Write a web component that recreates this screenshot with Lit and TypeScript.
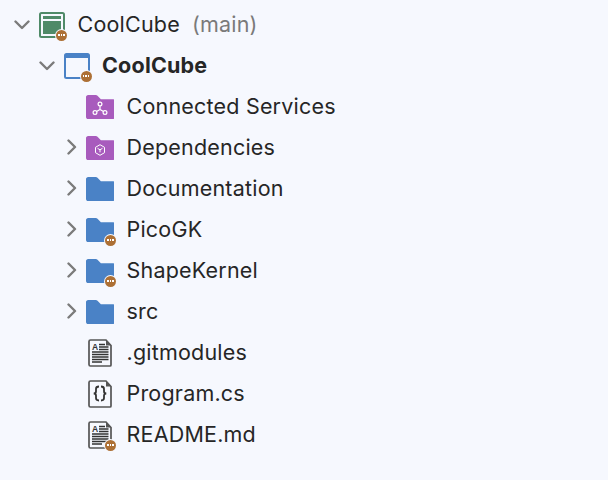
import { LitElement, css, html, svg, nothing } from 'lit';
import { customElement } from 'lit/decorators.js';

type IconKind = 'project' | 'window' | 'services' | 'deps' | 'folder' | 'doc' | 'code';

interface Row {
  label: string;
  level: number;
  icon: IconKind;
  chevron?: 'open' | 'closed';
  badge?: boolean;
  bold?: boolean;
  suffix?: string;
}

const ROWS: Row[] = [
  { label: 'CoolCube', suffix: '(main)', level: 0, icon: 'project', chevron: 'open', badge: true },
  { label: 'CoolCube', level: 1, icon: 'window', chevron: 'open', badge: true, bold: true },
  { label: 'Connected Services', level: 2, icon: 'services' },
  { label: 'Dependencies', level: 2, icon: 'deps', chevron: 'closed' },
  { label: 'Documentation', level: 2, icon: 'folder', chevron: 'closed' },
  { label: 'PicoGK', level: 2, icon: 'folder', chevron: 'closed', badge: true },
  { label: 'ShapeKernel', level: 2, icon: 'folder', chevron: 'closed', badge: true },
  { label: 'src', level: 2, icon: 'folder', chevron: 'closed' },
  { label: '.gitmodules', level: 2, icon: 'doc' },
  { label: 'Program.cs', level: 2, icon: 'code' },
  { label: 'README.md', level: 2, icon: 'doc', badge: true },
];

const FOLDER = 'M0 2.2C0 1 .9 0 2.2 0h7.6c.7 0 1.2.2 1.7.7l3.4 3.5h11.9c1.2 0 2.1.9 2.1 2.1v15.6c0 1.2-.9 2.1-2.1 2.1H2.2C.9 24 0 23.1 0 21.9z';
const PAGE = 'M2.5 1h15.5l5 5.5v19.5a1 1 0 0 1-1 1H2.5A1.5 1.5 0 0 1 1 25.5v-23A1.5 1.5 0 0 1 2.5 1z';

const docLines = svg`
  <text x="4" y="11" font-family="Liberation Sans, sans-serif" font-size="8.5" font-weight="700" fill="#333">A</text>
  <path d="M11 5.500h6M11 8h9.500M11 10.500h9.500M4 13h16.500M4 15.500h16.500M4 18h16.500M4 20.500h16.500M4 23h10" stroke="#333" stroke-width="1.300" fill="none"/>
`;

function icon(kind: IconKind) {
  switch (kind) {
    case 'project':
      return html`<svg width="28" height="28" viewBox="0 0 28 28">
        <rect x="3" y="2" width="24" height="24" rx="1.5" fill="none" stroke="#4f8a68" stroke-width="2"/>
        <rect x="6" y="5" width="18" height="3" fill="#4f8a68"/>
        <rect x="6" y="10" width="18" height="13" fill="#4f8a68"/>
      </svg>`;
    case 'window':
      return html`<svg width="28" height="28" viewBox="0 0 28 28">
        <rect x="3" y="2" width="24" height="24" rx="1.5" fill="none" stroke="#4a82c6" stroke-width="2"/>
        <rect x="3" y="2" width="24" height="4" fill="#4a82c6"/>
      </svg>`;
    case 'services':
      return html`<svg width="28" height="24" viewBox="0 0 28 24">
        <path d=${FOLDER} fill="#a85bbd"/>
        <g fill="none" stroke="#fff" stroke-width="1.200">
          <circle cx="14" cy="9" r="1.900"/><circle cx="9" cy="17.500" r="1.900"/><circle cx="19" cy="17.500" r="1.900"/>
          <path d="M14 11v3.500M14 14.500l-3.500 2M14 14.500l3.500 2"/>
        </g>
      </svg>`;
    case 'deps':
      return html`<svg width="28" height="24" viewBox="0 0 28 24">
        <path d=${FOLDER} fill="#a85bbd"/>
        <g fill="none" stroke="#fff" stroke-width="1">
          <path d="M14 8.700l4.500 2.600v5.400l-4.500 2.600-4.500-2.600v-5.400z"/>
          <path d="M11.500 12.300l2.500 1.500 2.500-1.500M14 13.800v2.500"/>
        </g>
      </svg>`;
    case 'folder':
      return html`<svg width="28" height="24" viewBox="0 0 28 24"><path d=${FOLDER} fill="#4a82c6"/></svg>`;
    case 'doc':
      return html`<svg width="24" height="28" viewBox="0 0 24 28">
        <path d=${PAGE} fill="none" stroke="#555" stroke-width="1.700"/>
        <path d="M18 1v5.500h5z" fill="#555"/>
        ${docLines}
      </svg>`;
    case 'code':
      return html`<svg width="24" height="28" viewBox="0 0 24 28">
        <path d=${PAGE} fill="none" stroke="#555" stroke-width="1.700"/>
        <path d="M18 1v5.500h5z" fill="#555"/>
        <path d="M11 6.500c-2.200 0-3 .9-3 2.400v2.300c0 1.200-.9 2.300-2.300 2.300 1.400 0 2.300 1.100 2.300 2.300v2.300c0 1.500.8 2.400 3 2.400M13 6.500c2.200 0 3 .9 3 2.400v2.300c0 1.200.9 2.300 2.300 2.300-1.400 0-2.300 1.100-2.300 2.300v2.300c0 1.500-.8 2.400-3 2.400" fill="none" stroke="#333" stroke-width="1.800"/>
      </svg>`;
  }
}

@customElement('app-root')
export class AppRoot extends LitElement {
  static styles = css`
    :host {
      display: block;
      height: 480px;
      background: #f6f8fe;
      font-family: Inter, 'Liberation Sans', sans-serif;
      overflow: hidden;
    }
    .tree {
      padding-top: 4px;
    }
    .row {
      display: flex;
      align-items: center;
      height: 41px;
      font-size: 21.5px;
      letter-spacing: 0.2px;
      color: #262626;
    }
    .chevron {
      width: 24px;
      margin-left: 10px;
      flex: none;
      display: flex;
      justify-content: center;
    }
    .closed {
      margin-bottom: 1px;
      margin-left: 1px;
    }
    .icon {
      position: relative;
      width: 28px;
      height: 28px;
      margin: 0 12.5px 0 3px;
      flex: none;
      display: flex;
      align-items: center;
      justify-content: center;
    }
    .badge {
      position: absolute;
      right: -2px;
      bottom: -2px;
      width: 11px;
      height: 11px;
      border-radius: 50%;
      background: #ad7035;
      box-shadow: 0 0 0 1px #f6f8fe;
      display: flex;
      align-items: center;
      justify-content: center;
      gap: 1px;
    }
    .badge i {
      width: 1.5px;
      height: 1.5px;
      background: #fff;
    }
    .label {
      padding-bottom: 2px;
    }
    .bold {
      font-weight: 700;
    }
    .suffix {
      color: #7a7a7a;
      margin-left: 12px;
      padding-bottom: 2px;
    }
  `;

  private _chevron(state?: 'open' | 'closed') {
    if (!state) return nothing;
    const d = state === 'open' ? 'M1.5 1.5L8 8l6.5-6.5' : 'M1.5 1.5L8 8l-6.5 6.500';
    const size = state === 'open' ? [16, 10] : [10, 16];
    return html`<svg class=${state} width=${size[0]} height=${size[1]} viewBox="0 0 ${size[0]} ${size[1]}">
      <path d=${d} fill="none" stroke="#7b7b7b" stroke-width="2.400" stroke-linecap="round" stroke-linejoin="round"/>
    </svg>`;
  }

  render() {
    return html`<div class="tree">
      ${ROWS.map(
        (r) => html`<div class="row" style="padding-left:${r.level * 24.5}px">
          <span class="chevron">${this._chevron(r.chevron)}</span>
          <span class="icon">
            ${icon(r.icon)}
            ${r.badge ? html`<span class="badge"><i></i><i></i><i></i></span>` : nothing}
          </span>
          <span class="label ${r.bold ? 'bold' : ''}">${r.label}</span>
          ${r.suffix ? html`<span class="suffix">${r.suffix}</span>` : nothing}
        </div>`,
      )}
    </div>`;
  }
}

declare global {
  interface HTMLElementTagNameMap {
    'app-root': AppRoot;
  }
}
